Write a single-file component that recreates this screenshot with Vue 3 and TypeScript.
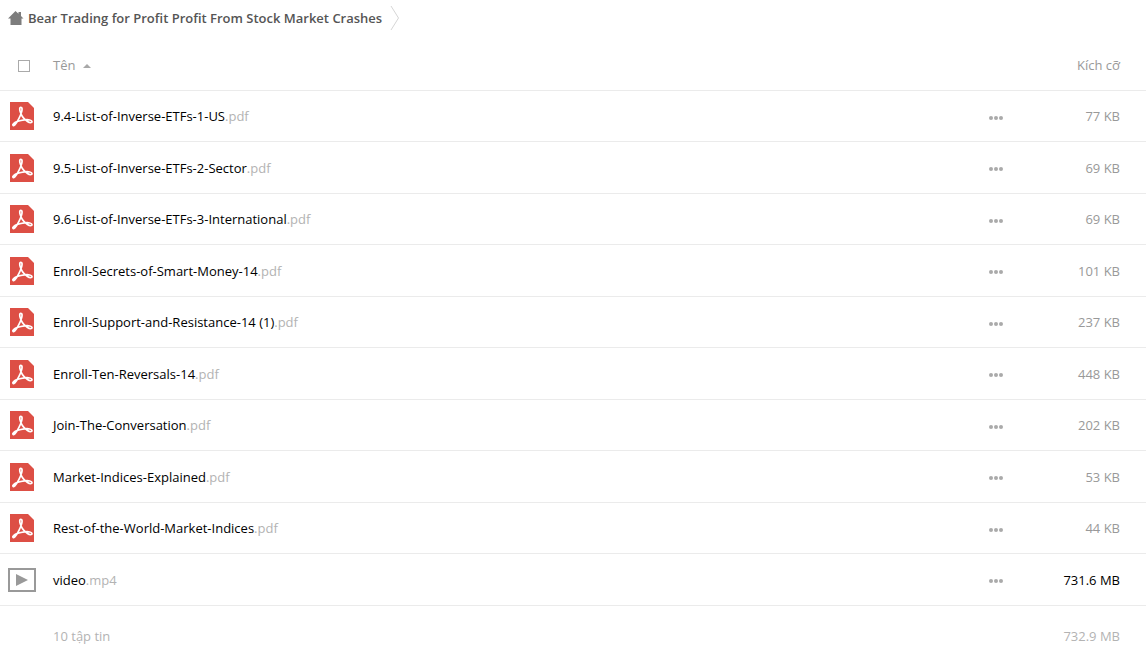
<script setup lang="ts">
interface FileEntry {
  name: string
  ext: string
  size: string
  kind: 'pdf' | 'video'
}

const files: FileEntry[] = [
  { name: '9.4-List-of-Inverse-ETFs-1-US', ext: '.pdf', size: '77 KB', kind: 'pdf' },
  { name: '9.5-List-of-Inverse-ETFs-2-Sector', ext: '.pdf', size: '69 KB', kind: 'pdf' },
  { name: '9.6-List-of-Inverse-ETFs-3-International', ext: '.pdf', size: '69 KB', kind: 'pdf' },
  { name: 'Enroll-Secrets-of-Smart-Money-14', ext: '.pdf', size: '101 KB', kind: 'pdf' },
  { name: 'Enroll-Support-and-Resistance-14 (1)', ext: '.pdf', size: '237 KB', kind: 'pdf' },
  { name: 'Enroll-Ten-Reversals-14', ext: '.pdf', size: '448 KB', kind: 'pdf' },
  { name: 'Join-The-Conversation', ext: '.pdf', size: '202 KB', kind: 'pdf' },
  { name: 'Market-Indices-Explained', ext: '.pdf', size: '53 KB', kind: 'pdf' },
  { name: 'Rest-of-the-World-Market-Indices', ext: '.pdf', size: '44 KB', kind: 'pdf' },
  { name: 'video', ext: '.mp4', size: '731.6 MB', kind: 'video' },
]
</script>

<template>
  <main class="files">
    <nav class="crumbs">
      <a class="crumb" href="#">
        <svg class="home" width="16" height="14" viewBox="0 0 16 14" aria-hidden="true">
          <path d="M7.500 0L10.500 2.700V1H13V5L15.500 7.500H13.500V14H2.500V7.500H0Z" fill="#7d7d7d" />
        </svg>
        <span>Bear Trading for Profit Profit From Stock Market Crashes</span>
      </a>
      <svg class="chevron" width="10" height="26" viewBox="0 0 10 26" aria-hidden="true">
        <path d="M1 1L8.500 13L1 25" fill="none" stroke="#d6d6d6" stroke-width="1" />
      </svg>
    </nav>

    <table class="list">
      <thead>
        <tr>
          <th class="pick"><input class="check" type="checkbox" aria-label="Tên" /></th>
          <th class="name">
            <button class="sort" type="button">
              <span>Tên</span>
              <svg class="arrow" width="8" height="4" viewBox="0 0 8 4" aria-hidden="true">
                <path d="M4 0L8 4H0Z" fill="#a8a8a8" />
              </svg>
            </button>
          </th>
          <th class="actions"></th>
          <th class="size"><button class="sort" type="button">Kích cỡ</button></th>
        </tr>
      </thead>
      <tbody>
        <tr v-for="file in files" :key="file.name">
          <td class="icon">
            <svg v-if="file.kind === 'pdf'" width="28" height="28" viewBox="0 0 28 28" aria-hidden="true">
              <path d="M2 0H20L26 6V28H2Z" fill="#dd4f45" />
              <path
                d="M13 5.300C11.200 5.100 11.600 8 12.500 10.500C13.600 13.900 16.200 17.300 19.500 19.500C21.600 20.900 24 21.100 24 19.600C24 18 20.500 17.400 16.500 17.900C12.500 18.400 7.500 19.900 5.600 21.600C4 23.100 5.200 24.500 6.800 22.900C9.400 20.300 12.700 13.500 13.700 9.500C14.300 7.200 14.200 5.400 13 5.300Z"
                fill="none"
                stroke="#fff"
                stroke-width="1.700"
                stroke-linejoin="round"
              />
            </svg>
            <svg v-else width="28" height="28" viewBox="0 0 28 28" aria-hidden="true">
              <rect x="1" y="3" width="26" height="22" fill="#fff" stroke="#999" stroke-width="2" />
              <path d="M8 8L20 14L8 20Z" fill="#999" />
            </svg>
          </td>
          <td class="name"><a href="#">{{ file.name }}<span class="ext">{{ file.ext }}</span></a></td>
          <td class="actions">
            <button class="more" type="button" :aria-label="file.name">
              <svg width="14" height="4" viewBox="0 0 14 4" aria-hidden="true">
                <circle cx="2" cy="2" r="2" />
                <circle cx="7" cy="2" r="2" />
                <circle cx="12" cy="2" r="2" />
              </svg>
            </button>
          </td>
          <td class="size" :class="{ large: file.kind === 'video' }">{{ file.size }}</td>
        </tr>
      </tbody>
      <tfoot>
        <tr>
          <td></td>
          <td class="name">10 tập tin</td>
          <td></td>
          <td class="size">732.9 MB</td>
        </tr>
      </tfoot>
    </table>
  </main>
</template>

<style>
body {
  background: #fff;
}
</style>

<style scoped>
.files {
  font-family: "Open Sans", "Noto Sans", sans-serif;
  font-size: 13px;
  line-height: 20px;
  color: #000;
}

.crumbs {
  display: flex;
  align-items: center;
  gap: 8px;
  height: 36px;
  padding-left: 8px;
}

.crumb {
  display: flex;
  align-items: center;
  gap: 4px;
  font-weight: 600;
  color: #555;
  text-decoration: none;
}

.list {
  width: 100%;
  border-collapse: separate;
  border-spacing: 0;
  table-layout: fixed;
}

th,
td {
  box-sizing: border-box;
  padding: 0;
  text-align: left;
  vertical-align: middle;
  font-weight: 400;
}

thead th {
  height: 55px;
  padding-top: 4px;
  color: #999;
  border-bottom: 1px solid #ebebeb;
}

thead .pick {
  width: 53px;
  padding-top: 6px;
  padding-left: 18px;
}

tbody td {
  height: 52px;
  border-bottom: 1px solid #ebebeb;
}

tbody tr:nth-child(odd) td {
  height: 51px;
}

tfoot td {
  height: 60px;
  color: #b3b3b3;
}

.icon {
  padding-left: 8px;
}

.icon svg,
.more svg,
.check {
  display: block;
}

.check {
  appearance: none;
  box-sizing: border-box;
  width: 12px;
  height: 12px;
  margin: 0;
  border: 1px solid #aaa;
  background: #fff;
}

.sort {
  display: inline-flex;
  align-items: center;
  gap: 8px;
  padding: 0;
  border: 0;
  background: none;
  font: inherit;
  color: inherit;
}

.arrow {
  margin-top: 2px;
}

.name a {
  color: inherit;
  text-decoration: none;
}

.ext {
  color: #b3b3b3;
}

.actions {
  width: 32px;
}

.more {
  display: block;
  padding: 11px 9px 8px;
  border: 0;
  background: none;
  fill: #aaa;
}

.size {
  width: 134px;
  padding-right: 26px;
  text-align: right;
  color: #999;
}

tbody .large {
  color: #000;
}

tfoot .size {
  color: #b3b3b3;
}
</style>
